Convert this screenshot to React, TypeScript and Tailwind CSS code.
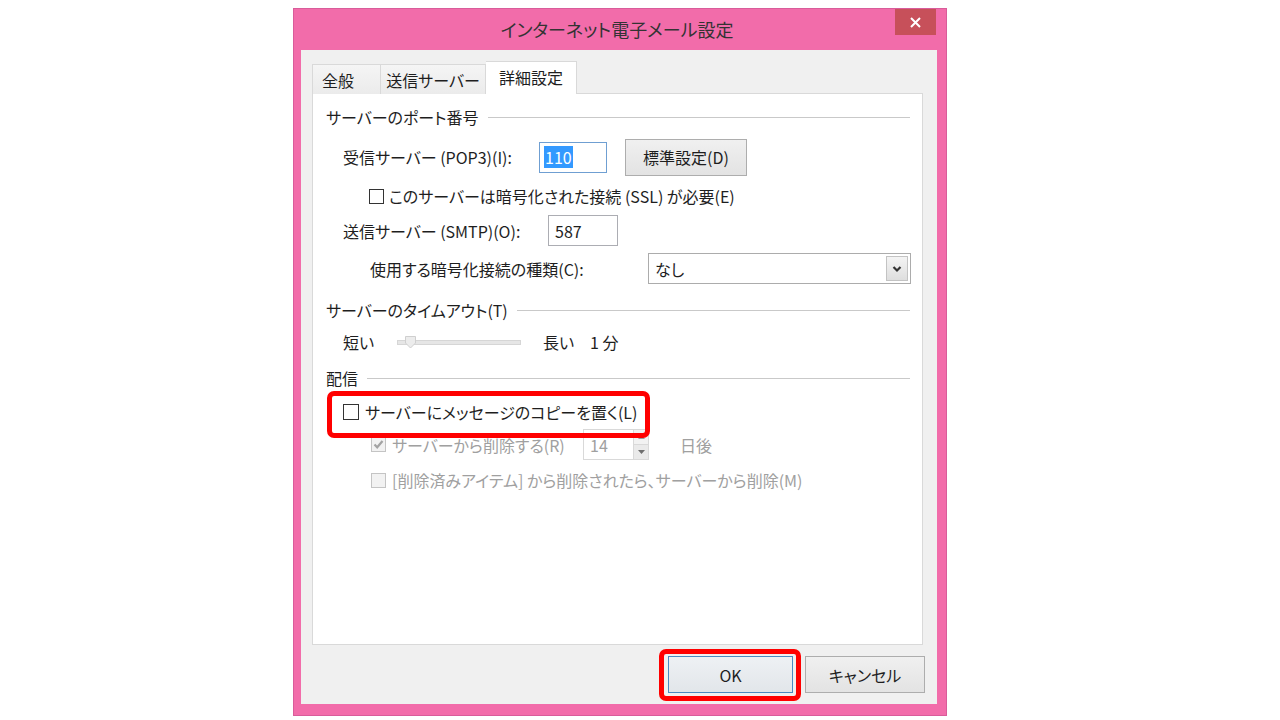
import React from 'react'

const font = "font-['Noto_Sans_CJK_JP','Noto_Sans',sans-serif] [font-feature-settings:'palt']"

function GroupHeader({ label, className = '' }: { label: string; className?: string }) {
  return (
    <div className={`flex items-center h-[20px] pl-[13px] pr-[12px] ${className}`}>
      <span className="text-[16px] leading-[20px] text-[#1e1e1e] whitespace-nowrap">{label}</span>
      <div className="flex-1 h-px bg-[#c9c9c9] ml-[9px]" />
    </div>
  )
}

function Check({ checked = false, disabled = false, size = 15 }: { checked?: boolean; disabled?: boolean; size?: number }) {
  return (
    <div
      className={`flex items-center justify-center shrink-0 border ${
        disabled ? 'border-[#c4c4c4] bg-[#f2f2f2]' : 'border-[#333333] bg-white'
      }`}
      style={{ width: size, height: size }}
    >
      {checked && (
        <svg width="11" height="11" viewBox="0 0 11 11">
          <path d="M1.5 5.5 L4.2 8.3 L9.5 2" fill="none" stroke="#a3a3a3" strokeWidth="2.2" />
        </svg>
      )}
    </div>
  )
}

function WinButton({ children, primary = false, width }: { children: React.ReactNode; primary?: boolean; width: number }) {
  return (
    <div
      className={`h-[37px] flex items-center justify-center text-[16px] text-[#1e1e1e] border bg-gradient-to-b ${
        primary ? 'border-[#4a89c0] from-[#eef1f4] to-[#e2e6ea]' : 'border-[#adadad] from-[#f0f0f0] to-[#e3e3e3]'
      }`}
      style={{ width }}
    >
      {children}
    </div>
  )
}

export default function App() {
  return (
    <div className={`w-[1280px] h-[720px] bg-white overflow-hidden ${font}`}>
      <div className="ml-[293px] mt-[8px] w-[654px] h-[708px] bg-[#f26caa] border border-[#d95c9a] flex flex-col">
        {/* title bar */}
        <div className="h-[41px] grid grid-cols-[1fr_auto_1fr] items-start">
          <div />
          <div className="pt-[9px] text-[18px] leading-[22px] text-[#333333] -ml-[6px]">インターネット電子メール設定</div>
          <div className="flex justify-end pr-[10px]">
            <div className="w-[41px] h-[26px] bg-[#c7505a] flex items-center justify-center">
              <svg width="11" height="11" viewBox="0 0 11 11">
                <path d="M1 1 L10 10 M10 1 L1 10" stroke="white" strokeWidth="2" />
              </svg>
            </div>
          </div>
        </div>

        {/* client */}
        <div className="ml-[7px] w-[636px] h-[654px] bg-[#f0f0f0] pt-[11px] pl-[11px] flex flex-col">
          {/* tabs */}
          <div className="flex items-end h-[33px] relative z-10 -mb-px">
            <div className="w-[69px] h-[30px] border border-[#d9d9d9] border-b-0 bg-gradient-to-b from-[#f5f5f5] to-[#ebebeb] flex items-center pl-[9px] text-[16px] text-[#1e1e1e]">
              全般
            </div>
            <div className="w-[105px] h-[30px] border border-[#d9d9d9] border-l-0 border-b-0 bg-gradient-to-b from-[#f5f5f5] to-[#ebebeb] flex items-center justify-center text-[16px] text-[#1e1e1e]">
              送信サーバー
            </div>
            <div className="w-[91px] h-[33px] border border-[#d9d9d9] border-l-0 border-b-0 bg-white flex items-start justify-center pt-[3px] text-[16px] text-[#1e1e1e]">
              詳細設定
            </div>
          </div>

          {/* panel */}
          <div className="w-[611px] h-[552px] border border-[#d9d9d9] bg-white flex flex-col text-[16px] text-[#1e1e1e]">
            <GroupHeader label="サーバーのポート番号" className="mt-[13px]" />

            <div className="mt-[14px] h-[32px] flex items-center pl-[30px]">
              <div className="w-[196px] whitespace-nowrap">受信サーバー (POP3)(I):</div>
              <div className="w-[68px] h-[31px] border border-[#6f9fd2] flex items-center pl-[4px]">
                <span className="bg-[#3399ff] text-white leading-[22px] px-[1px]">110</span>
              </div>
              <div className="ml-[18px]">
                <WinButton width={122}>標準設定(D)</WinButton>
              </div>
            </div>

            <div className="mt-[13px] h-[20px] flex items-center pl-[56px]">
              <Check size={15} />
              <span className="ml-[5px] whitespace-nowrap">このサーバーは暗号化された接続 (SSL) が必要(E)</span>
            </div>

            <div className="mt-[9px] h-[31px] flex items-center pl-[30px]">
              <div className="w-[205px] whitespace-nowrap">送信サーバー (SMTP)(O):</div>
              <div className="w-[70px] h-[31px] border border-[#acadb3] flex items-center pl-[6px]">587</div>
            </div>

            <div className="mt-[7px] h-[31px] flex items-center pl-[57px]">
              <div className="w-[278px] whitespace-nowrap">使用する暗号化接続の種類(C):</div>
              <div className="w-[263px] h-[31px] border border-[#acacac] flex items-center">
                <span className="flex-1 pl-[6px]">なし</span>
                <div className="w-[22px] h-[25px] mr-[2px] border border-[#c3c3c3] bg-gradient-to-b from-[#f4f4f4] to-[#dedede] flex items-center justify-center">
                  <svg width="10" height="8" viewBox="0 0 10 8">
                    <path d="M1.5 2 L5 5.5 L8.5 2" fill="none" stroke="#333333" strokeWidth="2.2" />
                  </svg>
                </div>
              </div>
            </div>

            <GroupHeader label="サーバーのタイムアウト(T)" className="mt-[16px]" />

            <div className="mt-[12px] h-[20px] flex items-center pl-[30px]">
              <div className="w-[54px]">短い</div>
              <div className="relative w-[124px] h-[5px] bg-[#e6e6e6] border border-[#d6d6d6]">
                <svg className="absolute left-[7px] -top-[5px]" width="11" height="13" viewBox="0 0 11 13">
                  <path d="M0.5 0.5 H10.5 V7 L5.5 12 L0.5 7 Z" fill="#ececec" stroke="#cfcfcf" />
                </svg>
              </div>
              <div className="ml-[22px] w-[47px]">長い</div>
              <div className="whitespace-pre">1 分</div>
            </div>

            <GroupHeader label="配信" className="mt-[16px]" />

            <div className="mt-[14px] h-[20px] flex items-center pl-[30px] relative">
              <Check size={16} />
              <span className="ml-[6px] whitespace-nowrap">サーバーにメッセージのコピーを置く(L)</span>
              <div className="absolute left-[14px] -top-[11px] w-[323px] h-[47px] border-[5px] border-[#ff0000] rounded-[7px]" />
            </div>

            <div className="mt-[7px] h-[31px] flex items-center pl-[58px] text-[#a0a0a0]">
              <Check size={15} checked disabled />
              <span className="ml-[6px] w-[191px] whitespace-nowrap">サーバーから削除する(R)</span>
              <div className="w-[66px] h-[31px] border border-[#d9d9d9] flex items-center">
                <span className="flex-1 pl-[6px]">14</span>
                <div className="w-[15px] h-[29px] flex flex-col border-l border-[#d9d9d9]">
                  <div className="flex-1 bg-[#f2f2f2] border-b border-[#d9d9d9] flex items-center justify-center">
                    <svg width="7" height="4" viewBox="0 0 7 4"><path d="M0 4 L3.5 0 L7 4 Z" fill="#9a9a9a" /></svg>
                  </div>
                  <div className="flex-1 bg-[#eaeaea] flex items-center justify-center">
                    <svg width="7" height="4" viewBox="0 0 7 4"><path d="M0 0 L3.5 4 L7 0 Z" fill="#6f6f6f" /></svg>
                  </div>
                </div>
              </div>
              <span className="ml-[31px]">日後</span>
            </div>

            <div className="mt-[10px] h-[20px] flex items-center pl-[58px] text-[#a0a0a0]">
              <Check size={15} disabled />
              <span className="ml-[6px] whitespace-nowrap">[削除済みアイテム] から削除されたら、サーバーから削除(M)</span>
            </div>
          </div>

          {/* buttons */}
          <div className="mt-[11px] flex justify-end pr-[12px] gap-[12px]">
            <div className="relative">
              <WinButton primary width={125}>OK</WinButton>
              <div className="absolute -left-[9px] -right-[8px] -top-[7px] -bottom-[8px] border-[5px] border-[#ff0000] rounded-[7px]" />
            </div>
            <WinButton width={120}>キャンセル</WinButton>
          </div>
        </div>
      </div>
    </div>
  )
}
